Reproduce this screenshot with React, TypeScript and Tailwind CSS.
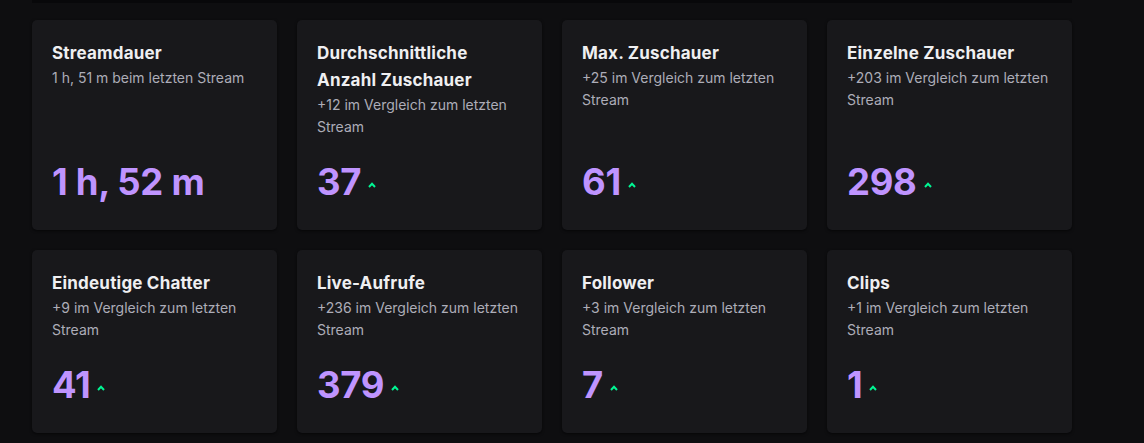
import React from "react";

type Stat = { title: string; sub: string; value: string; up?: boolean };

const row1: Stat[] = [
  { title: "Streamdauer", sub: "1 h, 51 m beim letzten Stream", value: "1 h, 52 m" },
  { title: "Durchschnittliche Anzahl Zuschauer", sub: "+12 im Vergleich zum letzten Stream", value: "37", up: true },
  { title: "Max. Zuschauer", sub: "+25 im Vergleich zum letzten Stream", value: "61", up: true },
  { title: "Einzelne Zuschauer", sub: "+203 im Vergleich zum letzten Stream", value: "298", up: true },
];
const row2: Stat[] = [
  { title: "Eindeutige Chatter", sub: "+9 im Vergleich zum letzten Stream", value: "41", up: true },
  { title: "Live-Aufrufe", sub: "+236 im Vergleich zum letzten Stream", value: "379", up: true },
  { title: "Follower", sub: "+3 im Vergleich zum letzten Stream", value: "7", up: true },
  { title: "Clips", sub: "+1 im Vergleich zum letzten Stream", value: "1", up: true },
];

function Caret() {
  return (
    <svg width="8" height="6" viewBox="0 0 8 6" className="ml-[7px] mt-[6px]">
      <path d="M1 5 L4 1.8 L7 5" fill="none" stroke="#00f593" strokeWidth="2" />
    </svg>
  );
}

function Card({ s }: { s: Stat }) {
  return (
    <div className="flex flex-col rounded-[5px] bg-[#18181b] px-5 pt-5 pb-5 shadow-[0_1px_3px_rgba(0,0,0,0.6)]">
      <div className="text-[17px] font-bold leading-[27px] tracking-[0.2px] text-[#efeff1]">{s.title}</div>
      <div className="text-[14px] leading-[22px] text-[#adadb8]">{s.sub}</div>
      <div className="mt-auto flex items-center pt-4">
        <span className="text-[36.5px] font-bold leading-[56px] tracking-[-0.3px] text-[#bf94ff]">{s.value}</span>
        {s.up && <Caret />}
      </div>
    </div>
  );
}

export default function App() {
  return (
    <div
      className="h-[443px] w-[1144px] overflow-hidden bg-[#0e0e10]"
      style={{ fontFamily: "Inter, 'Noto Sans', sans-serif" }}
    >
      <div className="ml-8 h-[3px] w-[1040px] bg-[#08080a]" />
      <div className="ml-8 mt-[17px] grid w-[1040px] grid-cols-4 gap-5">
        {row1.map((s) => (
          <Card key={s.title} s={s} />
        ))}
        {row2.map((s) => (
          <Card key={s.title} s={s} />
        ))}
      </div>
    </div>
  );
}
